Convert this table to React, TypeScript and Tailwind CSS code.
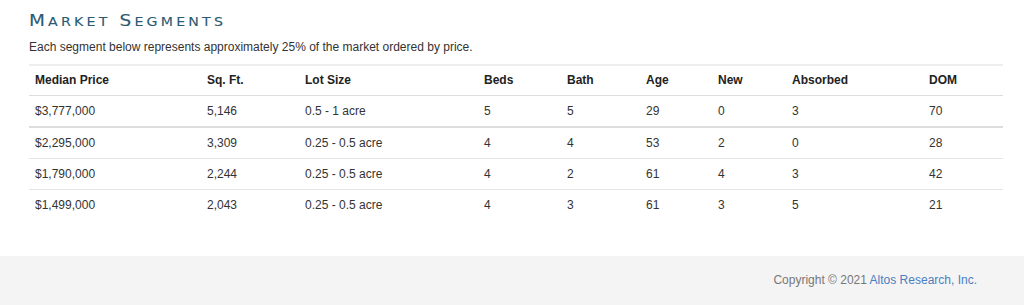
import React from 'react';

const headers = [
  { label: 'Median Price', w: 'w-[172px]' },
  { label: 'Sq. Ft.', w: 'w-[98px]' },
  { label: 'Lot Size', w: 'w-[179px]' },
  { label: 'Beds', w: 'w-[83px]' },
  { label: 'Bath', w: 'w-[79px]' },
  { label: 'Age', w: 'w-[72px]' },
  { label: 'New', w: 'w-[74px]' },
  { label: 'Absorbed', w: 'w-[137px]' },
  { label: 'DOM', w: 'w-[80px]' },
];

const rows = [
  ['$3,777,000', '5,146', '0.5 - 1 acre', '5', '5', '29', '0', '3', '70'],
  ['$2,295,000', '3,309', '0.25 - 0.5 acre', '4', '4', '53', '2', '0', '28'],
  ['$1,790,000', '2,244', '0.25 - 0.5 acre', '4', '2', '61', '4', '3', '42'],
  ['$1,499,000', '2,043', '0.25 - 0.5 acre', '4', '3', '61', '3', '5', '21'],
];

export default function App() {
  return (
    <div className="w-[1024px] h-[305px] bg-white flex flex-col font-['Liberation_Sans',Arial,sans-serif] text-[12px] text-[#333]">
      <div className="px-[29px] pt-[10px] h-[256px]">
        <h2 className="h-[22px] leading-[22px] text-[#2b5a72] font-['DejaVu_Sans',sans-serif] font-normal whitespace-nowrap">
          <span className="inline-block origin-left scale-x-[1.23] tracking-[2.6px] [-webkit-text-stroke:0.1px_#2b5a72]">
            <span className="text-[15px]">M</span>
            <span className="text-[11.5px]">ARKET</span>
            <span className="text-[15px]"> S</span>
            <span className="text-[11.5px]">EGMENTS</span>
          </span>
        </h2>
        <p className="mt-[7px] leading-[16px] text-[#333]">
          Each segment below represents approximately 25% of the market ordered by price.
        </p>
        <table className="mt-[9px] w-[974px] table-fixed border-collapse border-t-2 border-[#eeeeee]">
          <thead>
            <tr className="border-b border-[#dddddd]">
              {headers.map((h) => (
                <th key={h.label} className={`${h.w} text-left font-bold text-[#222] px-[6px] pt-[6px] pb-[7px] leading-[16px]`}>
                  {h.label}
                </th>
              ))}
            </tr>
          </thead>
          <tbody>
            {rows.map((r, i) => (
              <tr key={i} className={i === 0 ? 'border-b-2 border-[#dddddd]' : i < 3 ? 'border-b border-[#e5e5e5]' : ''}>
                {r.map((c, j) => (
                  <td key={j} className="px-[6px] py-[7px] leading-[16px]">
                    {c}
                  </td>
                ))}
              </tr>
            ))}
          </tbody>
        </table>
      </div>
      <div className="flex-1 bg-[#f4f4f4] flex items-center justify-end pr-[47px] pb-[1px]">
        <span className="text-[#777] text-[12px]">
          Copyright © 2021 <a className="text-[#4a7fc1]">Altos Research, Inc.</a>
        </span>
      </div>
    </div>
  );
}
